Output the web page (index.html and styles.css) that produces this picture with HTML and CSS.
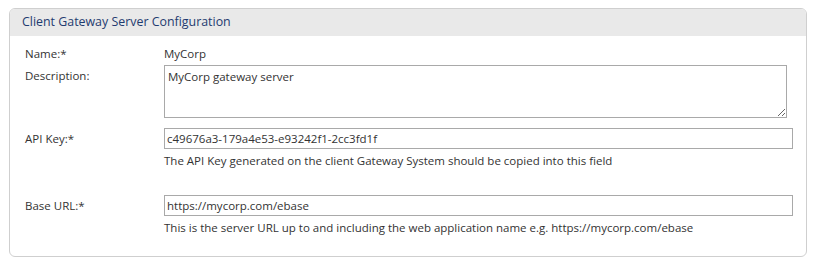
FILE: index.html
```html
<!DOCTYPE html>
<html lang="en">
<head>
    <meta charset="UTF-8">
    <title>Client Gateway Server Configuration</title>
    <link rel="stylesheet" href="styles.css">
</head>
<body>
    <div class="panel">
        <div class="panel-header">Client Gateway Server Configuration</div>
        <div class="panel-body">
            <div class="row row-name">
                <div class="label">Name:*</div>
                <div class="value">MyCorp</div>
            </div>
            <div class="row row-desc">
                <div class="label">Description:</div>
                <div class="value"><textarea class="desc">MyCorp gateway server</textarea></div>
            </div>
            <div class="row row-key">
                <div class="label">API Key:*</div>
                <div class="value">
                    <input class="field" type="text" value="c49676a3-179a4e53-e93242f1-2cc3fd1f">
                    <div class="hint">The API Key generated on the client Gateway System should be copied into this field</div>
                </div>
            </div>
            <div class="row row-url">
                <div class="label">Base URL:*</div>
                <div class="value">
                    <input class="field" type="text" value="https://mycorp.com/ebase">
                    <div class="hint">This is the server URL up to and including the web application name e.g. https://mycorp.com/ebase</div>
                </div>
            </div>
        </div>
    </div>
</body>
</html>
```

FILE: styles.css
```css
body { margin: 0; background: #fff; font-family: "Open Sans", "Noto Sans", sans-serif; font-size: 11.5px; color: #333; }
.panel { margin: 8px 7px 0 9px; width: 798px; height: 249px; border: 1px solid #cfcfcf; border-radius: 6px; box-sizing: border-box; overflow: hidden; }
.panel-header { height: 27px; line-height: 26px; padding-left: 12px; background: #e9e9e9; color: #1f3b70; font-size: 12.4px; }
.panel-body { padding: 6px 0 0 0; }
.row { display: flex; }
.label { width: 139px; padding-left: 15px; flex: none; }
.value { flex: 1; }
.row-name { height: 23px; padding-top: 4px; box-sizing: border-box; line-height: 16px; }
.row-desc { height: 63px; }
.row-desc .label { padding-top: 3px; }
.desc { display: block; width: 623px; height: 53px; box-sizing: border-box; border: 1px solid #a9a9a9; font: inherit; color: #333; padding: 3px 3px; resize: vertical; margin: 0; }
.row-key { height: 67px; }
.row-key .label, .row-url .label { padding-top: 3px; }
.field { display: block; width: 629px; height: 21px; box-sizing: border-box; border: 1px solid #a9a9a9; font: inherit; color: #333; padding: 0 2px; margin: 0; }
.hint { margin-top: 3px; line-height: 17px; }
```
